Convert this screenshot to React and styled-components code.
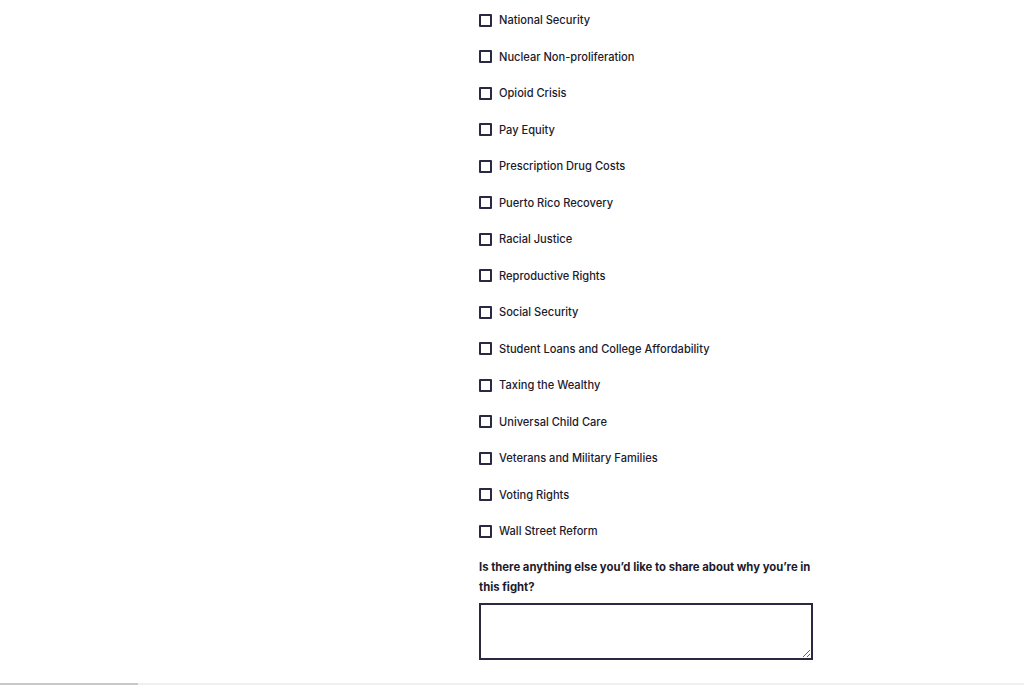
import styled, { createGlobalStyle } from 'styled-components';

const GlobalStyle = createGlobalStyle`
    html, body {
        margin: 0;
        padding: 0;
        background: #ffffff;
        overflow: hidden;
    }
`;

const issues = [
    'National Security',
    'Nuclear Non-proliferation',
    'Opioid Crisis',
    'Pay Equity',
    'Prescription Drug Costs',
    'Puerto Rico Recovery',
    'Racial Justice',
    'Reproductive Rights',
    'Social Security',
    'Student Loans and College Affordability',
    'Taxing the Wealthy',
    'Universal Child Care',
    'Veterans and Military Families',
    'Voting Rights',
    'Wall Street Reform',
];

function App() {
    return (
        <Page>
            <GlobalStyle />
            <Main>
                <Form>
                    <IssueList>
                        {issues.map((issue) => (
                            <Option key={issue}>
                                <Box type='checkbox' />
                                <span>{issue}</span>
                            </Option>
                        ))}
                    </IssueList>
                    <Question>Is there anything else you’d like to share about why you’re in this fight?</Question>
                    <TextArea />
                </Form>
            </Main>
            <ScrollTrack>
                <ScrollThumb />
            </ScrollTrack>
        </Page>
    );
}

const Page = styled.div`
    height: 686px;
    display: flex;
    flex-direction: column;
    font-family: Inter, 'Liberation Sans', sans-serif;
    color: #1c1a2c;
`;

const Main = styled.main`
    flex: 1;
    padding-left: 479px;
`;

const Form = styled.form`
    width: 334px;
    display: flex;
    flex-direction: column;
`;

const IssueList = styled.div`
    display: flex;
    flex-direction: column;
    gap: 20px;
    padding-top: 12px;
`;

const Option = styled.label`
    display: flex;
    align-items: center;
    gap: 7px;
    height: 16.5px;
    font-size: 11.1px;
    font-weight: 500;
`;

const Box = styled.input`
    appearance: none;
    margin: 0;
    width: 13px;
    height: 13px;
    box-sizing: border-box;
    border: 2px solid #2b2842;
    border-radius: 1px;
    background: #fff;
`;

const Question = styled.p`
    margin: 17px 0 6px;
    font-size: 11.3px;
    font-weight: 700;
    line-height: 20px;
`;

const TextArea = styled.textarea`
    width: 334px;
    height: 57px;
    box-sizing: border-box;
    border: 2px solid #2b2842;
    border-radius: 0;
    margin: 0;
    resize: vertical;
`;

const ScrollTrack = styled.div`
    height: 2px;
    margin-bottom: 1px;
    background: #efefef;
`;

const ScrollThumb = styled.div`
    width: 138px;
    height: 100%;
    background: #c8c8c8;
`;

export default App;
